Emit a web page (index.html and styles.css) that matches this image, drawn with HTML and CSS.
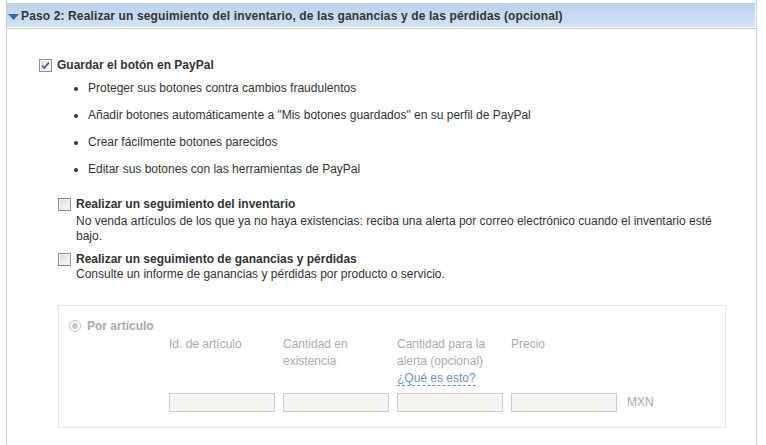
FILE: index.html
```html
<!DOCTYPE html>
<html lang="es">
<head>
    <meta charset="UTF-8">
    <meta name="viewport" content="width=device-width, initial-scale=1.0">
    <title>Paso 2</title>
    <link rel="stylesheet" href="styles.css">
</head>
<body>
    <div class="panel">
        <div class="panel-header">
            <svg class="arrow" width="11" height="6" viewBox="0 0 11 6"><polygon points="0,0 11,0 5.5,6" fill="#2f6bb3"/></svg>
            <span>Paso 2: Realizar un seguimiento del inventario, de las ganancias y de las pérdidas (opcional)</span>
        </div>
        <div class="panel-body">
            <label class="option main">
                <input type="checkbox" checked>
                <span>Guardar el botón en PayPal</span>
            </label>
            <ul class="benefits">
                <li>Proteger sus botones contra cambios fraudulentos</li>
                <li>Añadir botones automáticamente a "Mis botones guardados" en su perfil de PayPal</li>
                <li>Crear fácilmente botones parecidos</li>
                <li>Editar sus botones con las herramientas de PayPal</li>
            </ul>

            <div class="sub">
                <label class="option">
                    <input type="checkbox">
                    <span>Realizar un seguimiento del inventario</span>
                </label>
                <p class="desc">No venda artículos de los que ya no haya existencias: reciba una alerta por correo electrónico cuando el inventario esté bajo.</p>
            </div>
            <div class="sub">
                <label class="option">
                    <input type="checkbox">
                    <span>Realizar un seguimiento de ganancias y pérdidas</span>
                </label>
                <p class="desc">Consulte un informe de ganancias y pérdidas por producto o servicio.</p>
            </div>

            <div class="inventory">
                <label class="radio-row">
                    <input type="radio" disabled>
                    <span>Por artículo</span>
                </label>
                <div class="fields">
                    <div class="field">
                        <div class="field-label">Id. de artículo</div>
                        <input type="text" disabled>
                    </div>
                    <div class="field">
                        <div class="field-label">Cantidad en existencia</div>
                        <input type="text" disabled>
                    </div>
                    <div class="field">
                        <div class="field-label">Cantidad para la alerta (opcional)<br><a href="#" class="help">¿Qué es esto?</a></div>
                        <input type="text" disabled>
                    </div>
                    <div class="field">
                        <div class="field-label">Precio</div>
                        <input type="text" disabled>
                    </div>
                    <div class="currency">MXN</div>
                </div>
            </div>
        </div>
    </div>
</body>
</html>
```

FILE: styles.css
```css
body {
    font-family: "Liberation Sans", Arial, sans-serif;
    font-size: 12px;
    color: #333;
    background-color: #fff;
    margin: 0;
    padding: 0;
}

.panel {
    margin: 0 9px 0 6px;
    padding-top: 3px;
    border-left: 1px solid #ccc;
    border-right: 1px solid #ccc;
    min-height: 442px;
}

.panel-header {
    display: flex;
    align-items: center;
    height: 24px;
    padding-left: 1px;
    border-top: 1px solid #ccc;
    border-bottom: 1px solid #c8c8c8;
    box-shadow: inset 0 -1px 0 #fff, inset -1px 0 0 #fff;
    background: linear-gradient(#b9d2ef, #d4e4f6);
    font-weight: bold;
    letter-spacing: 0.13px;
    color: #333;
}

.arrow {
    margin: 2px 2px 0 0;
}

.panel-body {
    padding: 29px 0 0 32px;
}

.option {
    display: flex;
    align-items: center;
    font-weight: bold;
}

.option input {
    appearance: none;
    -webkit-appearance: none;
    width: 13px;
    height: 13px;
    margin: 0 5px 0 0;
    border: 1px solid #8f8f8f;
    background: linear-gradient(135deg, #dcdcdc, #fbfbfb);
    box-shadow: inset 0 0 0 1px #f4f4f4;
}

.option input:checked {
    background: url("data:image/svg+xml,%3Csvg xmlns='http://www.w3.org/2000/svg' width='11' height='11' viewBox='0 0 11 11'%3E%3Cpath d='M2 5.5 L4.3 8 L9 2.5' fill='none' stroke='%233d5a9e' stroke-width='1.8'/%3E%3C/svg%3E") center no-repeat, linear-gradient(135deg, #dcdcdc, #fbfbfb);
}

.benefits {
    margin: 9px 0 0 0;
    padding-left: 49px;
}

.benefits li {
    line-height: 15px;
    margin-bottom: 12px;
}

.sub {
    margin-left: 19px;
}

.benefits + .sub {
    margin-top: 20px;
}

.sub + .sub {
    margin-top: 8px;
}

.desc {
    margin: 3px 0 0 18px;
    line-height: 15px;
    max-width: 650px;
}

.sub + .sub .desc {
    margin-top: 1px;
}

.inventory {
    margin: 23px 0 0 19px;
    width: 646px;
    padding: 13px 10px 15px 10px;
    border: 1px solid #e6e6e6;
    color: #aaa;
}

.radio-row {
    display: flex;
    align-items: center;
    font-weight: bold;
}

.radio-row input {
    appearance: none;
    -webkit-appearance: none;
    margin: 0 6px 0 0;
    width: 12px;
    height: 12px;
    border-radius: 50%;
    border: 1px solid #c4c4c4;
    background: radial-gradient(circle, #bdbdbd 0, #cfcfcf 2.5px, #fff 3.5px);
}

.fields {
    display: flex;
    align-items: flex-end;
    gap: 8px;
    margin: 3px 0 0 100px;
}

.field {
    width: 106px;
}

.field-label {
    height: 57px;
    line-height: 17px;
    padding-right: 10px;
}

.field input {
    width: 106px;
    height: 19px;
    box-sizing: border-box;
    border: 1px solid #ccc;
    background-color: #f4f4f0;
    margin: 0;
    display: block;
}

.currency {
    padding: 0 0 3px 2px;
}

.help {
    color: #6a92c8;
    text-decoration: none;
    border-bottom: 1px dashed #6a92c8;
}
```
